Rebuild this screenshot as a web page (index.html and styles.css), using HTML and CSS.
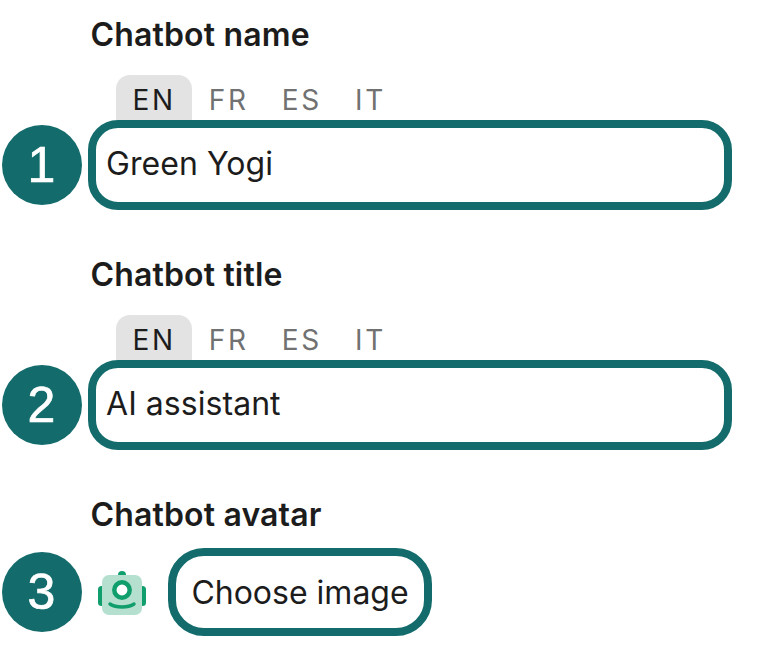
FILE: index.html
```html
<!DOCTYPE html>
<html lang="en">
<head>
<meta charset="utf-8">
<title>Chatbot settings</title>
<link rel="stylesheet" href="styles.css">
</head>
<body>
<main class="page">
  <section class="field">
    <h2 class="label">Chatbot name</h2>
    <div class="tabs">
      <span class="tab active">EN</span><span class="tab">FR</span><span class="tab">ES</span><span class="tab">IT</span>
    </div>
    <div class="row">
      <span class="badge">1</span>
      <div class="input">Green Yogi</div>
    </div>
  </section>
  <section class="field">
    <h2 class="label">Chatbot title</h2>
    <div class="tabs">
      <span class="tab active">EN</span><span class="tab">FR</span><span class="tab">ES</span><span class="tab">IT</span>
    </div>
    <div class="row">
      <span class="badge">2</span>
      <div class="input">AI assistant</div>
    </div>
  </section>
  <section class="field avatar-field">
    <h2 class="label">Chatbot avatar</h2>
    <div class="row avatar-row">
      <span class="badge">3</span>
      <svg class="avatar" viewBox="0 0 48 48" aria-hidden="true">
        <path d="M20 7a4 4 0 0 1 8 0z" fill="#109e6d"/>
        <path d="M4 18H3.500A3.500 3.500 0 0 0 0 21.500v13A3.500 3.500 0 0 0 3.500 38H4z" fill="#109e6d"/>
        <path d="M44 18h.5a3.500 3.500 0 0 1 3.500 3.500v13a3.500 3.500 0 0 1-3.500 3.500H44z" fill="#109e6d"/>
        <rect x="4" y="7" width="40" height="40" rx="7" fill="#b5e0d0"/>
        <circle cx="24" cy="22" r="7.700" fill="#fff" stroke="#109e6d" stroke-width="4.500"/>
        <path d="M12 36c3 2 7 3 12 3s9-1 12-3" fill="none" stroke="#109e6d" stroke-width="3.500" stroke-linecap="round"/>
      </svg>
      <button class="choose" type="button">Choose image</button>
    </div>
  </section>
</main>
</body>
</html>
```
FILE: styles.css
```css
* {
  box-sizing: border-box;
}

html,
body {
  margin: 0;
  background: #fff;
}

body {
  font-family: Inter, "Liberation Sans", sans-serif;
  color: #1c1c1c;
}

.page {
  display: flex;
  flex-direction: column;
  width: 762px;
  height: 672px;
  padding: 15px 30px 0 2px;
  gap: 45px;
}

.field {
  display: flex;
  flex-direction: column;
}

.label {
  margin: 0 0 0 88.500px;
  font-size: 32px;
  line-height: 40px;
  font-weight: 600;
  letter-spacing: 0.150px;
}

.tabs {
  display: flex;
  margin: 20px 0 0 114px;
  height: 45px;
}

.tab {
  height: 45px;
  padding: 9px 16.500px 0;
  font-size: 28px;
  line-height: 32px;
  letter-spacing: 2.700px;
  color: #717171;
}

.tab.active {
  background: #e3e3e3;
  border-radius: 14px 14px 0 0;
  color: #1c1c1c;
}

.row {
  display: flex;
  align-items: center;
  gap: 6px;
}

.badge {
  flex: none;
  width: 80px;
  height: 80px;
  padding-right: 1px;
  border-radius: 50%;
  background: #136b6b;
  color: #fff;
  font-family: "Liberation Sans", Arimo, sans-serif;
  font-size: 50px;
  line-height: 80px;
  text-align: center;
  -webkit-text-stroke: 0.700px #fff;
}

.input {
  flex: 1;
  height: 90px;
  border: 8px solid #136b6b;
  border-radius: 30px;
  padding: 0 10px;
  font-size: 32px;
  line-height: 72px;
  letter-spacing: 0.050px;
  background: #fff;
}

.avatar-field .label {
  margin-bottom: 13px;
}

.avatar-row {
  gap: 0;
}

.avatar {
  flex: none;
  width: 48px;
  height: 48px;
  margin: 0 22px 0 16px;
}

.choose {
  flex: none;
  width: 264px;
  height: 88px;
  border: 8px solid #136b6b;
  border-radius: 36px;
  background: #fff;
  padding: 0;
  font-family: inherit;
  font-size: 32px;
  color: #1c1c1c;
}
```
